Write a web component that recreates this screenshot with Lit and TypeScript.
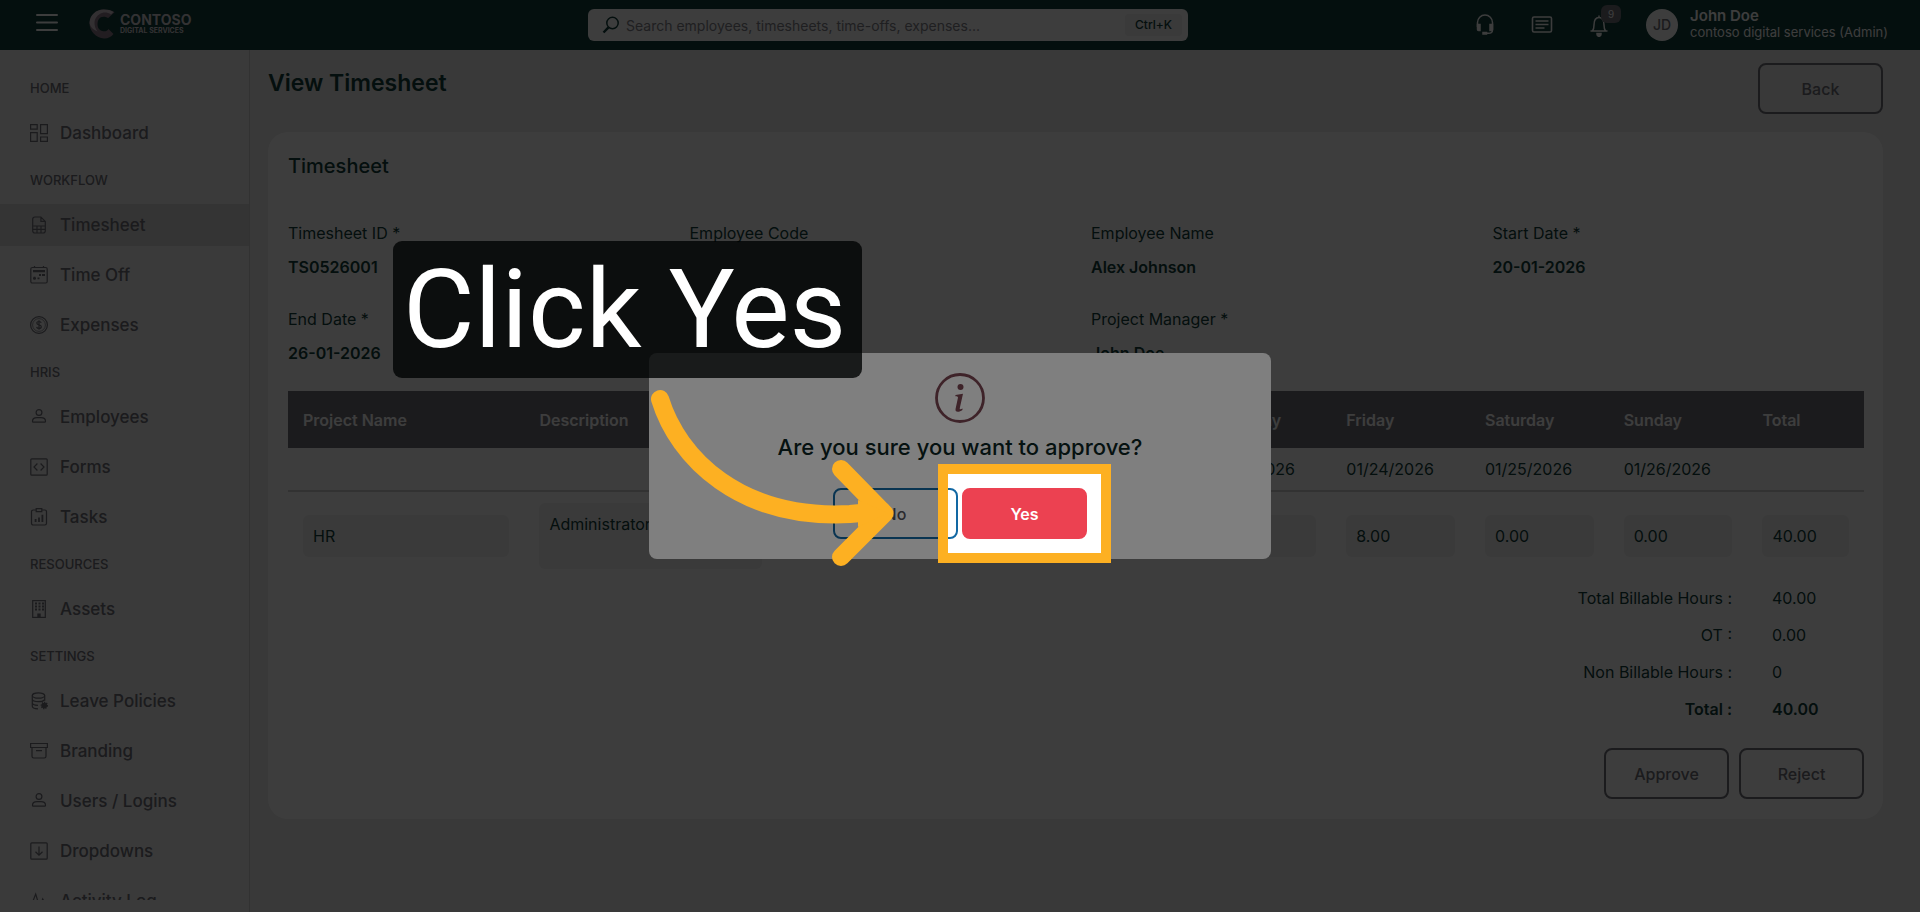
import { LitElement, html, css, svg, nothing } from "lit";
import { customElement } from "lit/decorators.js";
import { classMap } from "lit/directives/class-map.js";

const icons: Record<string, unknown> = {
  dashboard: svg`<path d="M.6 .6h6.600v4.600H.6zM10.600 .6h6.800v9h-6.800zM.6 8.600h6.600v8.800H.6zM10.600 13h6.800v4.400h-6.800z"/>`,
  timesheet: svg`<path d="M2.700 3.200A2.200 2.200 0 0 1 4.900 1h6L15.300 5.400v9.400a2.200 2.200 0 0 1-2.200 2.200H4.900a2.200 2.200 0 0 1-2.200-2.200zM10.900 1v4.400h4.400M2.700 10h12.600M2.700 13.400h12.600M7 10v7M11 10v7"/>`,
  timeoff: svg`<rect x=".8" y="1.500" width="16.400" height="15.500" rx="1.500"/><path d="M4.500 0v2M13.500 0v2"/><path d="M3 4.500h12M3 5.700h12"/><path stroke-width="1.800" d="M9 9h2M12 9h3M7.500 12.300h2M3 12.300h3M4.500 10.800v3"/>`,
  expenses: svg`<circle cx="9" cy="9" r="8.400"/><circle cx="9" cy="9" r="6.400" stroke-width=".7"/><path d="M11.200 6.800C10.900 5.900 10 5.500 9 5.500c-1.300 0-2.200.6-2.200 1.600C6.800 9.500 11.300 8.400 11.300 10.800c0 1-.9 1.700-2.300 1.700-1.200 0-2.100-.5-2.400-1.500M9 4.300v9.400"/>`,
  person: svg`<circle cx="9" cy="4.500" r="2.900"/><path d="M2.500 13.200c0-2.300 2-3.600 4.500-3.600h4c2.500 0 4.500 1.300 4.500 3.600 0 .7-.4 1-1 1h-11c-.6 0-1-.3-1-1z"/>`,
  forms: svg`<rect x=".8" y=".8" width="16.400" height="16.400" rx="1"/><path d="M7.400 5.500L4 9l3.400 3.500M10.600 5.500L14 9l-3.400 3.500"/>`,
  tasks: svg`<path d="M6 2H3.200A1.700 1.700 0 0 0 1.500 3.700v11.600A1.700 1.700 0 0 0 3.200 17h11.600a1.700 1.700 0 0 0 1.700-1.700V3.700A1.700 1.700 0 0 0 14.800 2H12M6.200.6h5.600v3H6.200z"/><path stroke-width="1.800" d="M5.600 14v-3M9 14V9.500M12.400 14V6.800"/>`,
  assets: svg`<rect x="2.700" y=".6" width="12.600" height="16.800"/><path stroke-width="1.800" stroke-dasharray="2 1.500" d="M5 3.500h9M5 6.500h9M5 9.500h9"/><path stroke-width="3.400" d="M9 17v-3.500"/>`,
  leave: svg`<ellipse cx="8.500" cy="3.500" rx="6.200" ry="2.700"/><path d="M2.300 3.500v10.800c0 1.400 2.400 2.500 5.700 2.600M14.700 3.500v5.200M2.300 7c0 1.500 2.700 2.700 6.200 2.700 2.600 0 4.900-.7 5.800-1.700M2.300 10.700c0 1.400 2.400 2.500 5.700 2.600"/><circle cx="14.300" cy="13.500" r="2.800" fill="currentColor" stroke-width="1.800" stroke-dasharray="1.200 .9"/>`,
  branding: svg`<path d="M.6 1.500h16.800v4H.6zM2 5.500v8.800A1.700 1.700 0 0 0 3.700 16h10.600a1.700 1.700 0 0 0 1.700-1.700V5.500M6 8.700h6"/>`,
  dropdowns: svg`<rect x=".8" y=".8" width="16.400" height="16.400" rx="1"/><path d="M9 4.500v8.500M5.500 9.800L9 13.200l3.500-3.400"/>`,
  activity: svg`<path d="M0 8.500h3.200L5.700 2l4 13.500 3-8.500 1.500 2.500H18"/>`,
};

const nav = [
  { title: "HOME", items: [["dashboard", "Dashboard"]] },
  { title: "WORKFLOW", items: [["timesheet", "Timesheet"], ["timeoff", "Time Off"], ["expenses", "Expenses"]] },
  { title: "HRIS", items: [["person", "Employees"], ["forms", "Forms"], ["tasks", "Tasks"]] },
  { title: "RESOURCES", items: [["assets", "Assets"]] },
  {
    title: "SETTINGS",
    items: [["leave", "Leave Policies"], ["branding", "Branding"], ["person", "Users / Logins"], ["dropdowns", "Dropdowns"], ["activity", "Activity Log"]],
  },
];

const buttonStyles = css`
  button {
    font: inherit;
    cursor: pointer;
  }
  .btn {
    box-sizing: border-box;
    min-width: 125px;
    height: 51px;
    border: 2px solid #71717a;
    border-radius: 8px;
    background: transparent;
    color: #71717a;
    font-size: 16px;
    font-weight: 500;
  }
`;

@customElement("app-header")
class AppHeader extends LitElement {
  static styles = css`
    :host { display: block; background: #113e3a; color: #fff; }
    .bar { display: flex; align-items: center; height: 50px; padding: 0 32px 0 36px; box-sizing: border-box; }
    .side { display: flex; align-items: center; }
    .left { flex: 0 1 552px; }
    .menu { background: none; border: 0; padding: 0; color: inherit; width: 22px; height: 20px; cursor: pointer; margin-top: -4px; }
    .logo { display: flex; align-items: center; gap: 5px; margin-left: 31px; margin-top: -2px; color: #d5cfd5; }
    .brand { font-size: 14px; font-weight: 700; line-height: 14px; }
    .brand small { display: block; font-size: 7px; line-height: 8px; font-weight: 700; }
    .search { display: flex; align-items: center; gap: 6px; flex: 0 1 600px; height: 32px; box-sizing: border-box; padding: 0 6px 0 14px; background: #fff; border-radius: 6px; color: #113e3a; }
    .search input { flex: 1; min-width: 0; border: 0; outline: 0; background: none; font: inherit; font-size: 14px; color: inherit; padding: 0; }
    .search input::placeholder { color: #83838a; opacity: 1; }
    kbd { font: inherit; font-size: 12px; font-weight: 500; line-height: 22px; padding: 0 10px; background: #f0f0f0; border-radius: 4px; }
    .right { justify-content: flex-end; flex: 1; }
    .icon { position: relative; background: none; border: 0; padding: 0; color: inherit; width: 22px; height: 24px; cursor: pointer; margin-right: 35px; }
    .icon svg { display: block; }
    .badge { position: absolute; left: 13px; top: -8px; width: 20px; height: 18px; border-radius: 6px; background: #71717a; font-size: 11px; line-height: 18px; text-align: center; }
    .avatar { width: 32px; height: 32px; border-radius: 50%; background: #fff; color: #71717a; font-size: 14px; font-weight: 500; line-height: 32px; text-align: center; margin: 0 12px 0 1px; }
    .who { font-size: 13px; line-height: 16px; white-space: nowrap; padding-bottom: 2px; }
    .who b { display: block; font-size: 15px; font-weight: 600; }
  `;
  render() {
    return html`<header class="bar">
      <div class="side left">
        <button class="menu" aria-label="Menu">
          <svg width="22" height="20" viewBox="0 0 22 20" stroke="currentColor" stroke-width="2" stroke-linecap="round"><path d="M1 2h20M1 9.500h20M1 17h20" /></svg>
        </button>
        <div class="logo">
          <svg width="26" height="30" viewBox="0 0 26 30">
            <path fill="#8d7a8a" d="M15 .5C7 .5 1 7 .5 14 .3 22 7 29 15 29.500c4 .2 7-1.500 9.500-4.500l-5-5c-1 2-3 2.500-5 2.300-4-.3-6-3.500-6-7.300s2-7.300 6-7.300c2 0 3.500.5 4.500 1.500l6.500-6C23 1.500 20 .5 15 .5z" />
            <path fill="#d5c8d2" d="M.6 13C1 6 7 .5 14.500.5 19 .5 22 1.300 24.500 3L22 5.500c-3-2-6-2.500-9-1.500-4 1.300-7 5-7.500 9-.2 4 1 7 3 9.500C3 20 .5 17 .6 13z" />
          </svg>
          <div class="brand">CONTOSO<small>DIGITAL SERVICES</small></div>
        </div>
      </div>
      <label class="search">
        <svg width="18" height="18" viewBox="0 0 18 18" fill="none" stroke="currentColor" stroke-width="1.500"><circle cx="10.500" cy="7" r="5.700" /><path stroke-width="2.400" d="M6.500 11.300L1.500 16.500" /></svg>
        <input type="search" aria-label="Search" placeholder="Search employees, timesheets, time-offs, expenses..." />
        <kbd>Ctrl+K</kbd>
      </label>
      <div class="side right">
        <button class="icon" aria-label="Support">
          <svg width="22" height="24" viewBox="0 0 22 24" fill="none" stroke="currentColor" stroke-width="1.500"><path d="M3.500 14V9.500a7.500 7.500 0 0 1 15 0V17c0 2.500-1.500 3.300-4 3.300H12" /><path fill="currentColor" d="M3.500 11.500h2.500v6H4.500a1 1 0 0 1-1-1zM18.500 11.500H16v6h1.500a1 1 0 0 0 1-1zM9 19.500h3.500v1.500H9z" /></svg>
        </button>
        <button class="icon" aria-label="Messages">
          <svg width="22" height="24" viewBox="0 0 22 24" fill="none" stroke="currentColor" stroke-width="1.600"><rect x="1.500" y="4" width="19" height="15" rx="1.500" /><path d="M4.500 8h13M4.500 11.500h13M4.500 15h9" /></svg>
        </button>
        <button class="icon" aria-label="Notifications">
          <svg width="22" height="24" viewBox="0 0 22 24" fill="none" stroke="currentColor" stroke-width="1.500"><path d="M2.500 18h17M4.500 18c1-1.500 1.500-3 1.500-6 0-4 1.500-7.500 5-7.500s5 3.500 5 7.500c0 3 .5 4.500 1.500 6M11 2.500v2" /><path fill="currentColor" d="M9 20.500h4v.8a2 2 0 0 1-4 0z" /></svg>
          <span class="badge">9</span>
        </button>
        <div class="avatar">JD</div>
        <div class="who"><b>John Doe</b>contoso digital services (Admin)</div>
      </div>
    </header>`;
  }
}

@customElement("app-sidebar")
class AppSidebar extends LitElement {
  static styles = css`
    :host { display: block; box-sizing: border-box; width: 250px; flex: none; padding-bottom: 12px; background: #f0f0f0; border-right: 1px solid #cfcfcf; color: #71717a; }
    nav { height: 100%; overflow: hidden; padding-top: 26px; box-sizing: border-box; }
    h2 { margin: 0; padding: 0 30px; font-size: 13px; font-weight: 500; line-height: 24px; }
    ul { list-style: none; margin: 12px 0 14px; padding: 0; display: grid; gap: 8px; }
    a { display: flex; align-items: center; gap: 12px; height: 42px; padding: 0 30px; color: inherit; text-decoration: none; font-size: 17px; font-weight: 500; }
    a.active { background: #d9d9d9; }
    svg { flex: none; }
  `;
  render() {
    return html`<nav>
      ${nav.map(
        (s) => html`<h2>${s.title}</h2>
          <ul>
            ${s.items.map(
              ([icon, label]) => html`<li>
                <a href="#" class=${classMap({ active: label === "Timesheet" })}>
                  <svg width="18" height="18" viewBox="0 0 18 18" fill="none" stroke="currentColor" stroke-width="1.200">${icons[icon]}</svg>${label}
                </a>
              </li>`
            )}
          </ul>`
      )}
    </nav>`;
  }
}

const details: [string, string][] = [
  ["Timesheet ID *", "TS0526001"],
  ["Employee Code", ""],
  ["Employee Name", "Alex Johnson"],
  ["Start Date *", "20-01-2026"],
  ["End Date *", "26-01-2026"],
  ["", ""],
  ["Project Manager *", "John Doe"],
];
const days: [string, string, string][] = [
  ["Monday", "01/20/2026", "8.00"],
  ["Tuesday", "01/21/2026", "8.00"],
  ["Wednesday", "01/22/2026", "8.00"],
  ["Thursday", "01/23/2026", "8.00"],
  ["Friday", "01/24/2026", "8.00"],
  ["Saturday", "01/25/2026", "0.00"],
  ["Sunday", "01/26/2026", "0.00"],
];
const totals = [
  ["Total Billable Hours :", "40.00"],
  ["OT :", "0.00"],
  ["Non Billable Hours :", "0"],
  ["Total :", "40.00"],
];

@customElement("timesheet-view")
class TimesheetView extends LitElement {
  static styles = [
    buttonStyles,
    css`
      :host { display: block; flex: 1; min-width: 0; overflow: hidden; box-sizing: border-box; padding: 13px 37px 0 18px; background: #ededed; color: #113e3a; }
      .top { display: flex; justify-content: space-between; align-items: flex-start; padding-bottom: 18px; }
      h1 { margin: 0; font-size: 23px; font-weight: 600; line-height: 41px; }
      .card { background: #fff; border-radius: 20px; padding: 20px 19px 20px 20px; }
      h2 { margin: 0 0 36px; font-size: 20px; font-weight: 500; line-height: 28px; }
      dl { margin: 0; }
      .details { display: grid; grid-template-columns: repeat(4, 1fr); column-gap: 30px; row-gap: 18px; font-size: 16px; line-height: 34px; }
      .details > div { height: 68px; }
      dd { margin: 0; }
      .details dd { font-weight: 600; }
      table { width: 100%; margin-top: 21px; table-layout: fixed; border-collapse: collapse; text-align: left; font-size: 16px; }
      th, td { box-sizing: border-box; padding: 0 15px; font-weight: 400; }
      .head th { height: 57px; padding-top: 0; background: #71717a; color: #fff; font-weight: 600; }
      .dates td { height: 43px; border-bottom: 2px solid #d2d2d2; }
      .entry td { height: 88px; }
      .project { width: 15%; }
      .desc { width: 16%; }
      .total { width: 7.400%; }
      input, textarea { display: block; box-sizing: border-box; width: 100%; height: 42px; padding: 0 10px; border: 0; border-radius: 6px; background: #f2f2f2; color: inherit; font: inherit; resize: none; outline: 0; }
      textarea { height: 66px; padding: 9px 10px; line-height: 24px; }
      .totals { display: grid; grid-template-columns: 1fr 92px; column-gap: 40px; row-gap: 5px; margin-top: 3px; line-height: 32px; font-size: 16px; }
      .totals > div { display: contents; }
      .totals dt { text-align: right; }
      .totals > div:last-child { font-weight: 600; }
      .actions { display: flex; justify-content: flex-end; gap: 10px; margin-top: 23px; }
    `,
  ];
  render() {
    return html`<main>
      <div class="top"><h1>View Timesheet</h1><button class="btn">Back</button></div>
      <section class="card">
        <h2>Timesheet</h2>
        <dl class="details">
          ${details.map(([k, v]) => html`<div>${k ? html`<dt>${k}</dt><dd>${v}</dd>` : nothing}</div>`)}
        </dl>
        <table>
          <thead>
            <tr class="head">
              <th class="project">Project Name</th>
              <th class="desc">Description</th>
              ${days.map(([d]) => html`<th>${d}</th>`)}
              <th class="total">Total</th>
            </tr>
          </thead>
          <tbody>
            <tr class="dates"><td></td><td></td>${days.map(([, d]) => html`<td>${d}</td>`)}<td></td></tr>
            <tr class="entry">
              <td><input aria-label="Project Name" readonly .value=${"HR"} /></td>
              <td><textarea aria-label="Description" readonly .value=${"Administrator"}></textarea></td>
              ${days.map(([d, , h]) => html`<td><input aria-label=${d} readonly .value=${h} /></td>`)}
              <td><input aria-label="Total" readonly .value=${"40.00"} /></td>
            </tr>
          </tbody>
        </table>
        <dl class="totals">
          ${totals.map(([k, v]) => html`<div><dt>${k}</dt><dd>${v}</dd></div>`)}
        </dl>
        <div class="actions"><button class="btn">Approve</button><button class="btn">Reject</button></div>
      </section>
    </main>`;
  }
}

@customElement("confirm-dialog")
class ConfirmDialog extends LitElement {
  static styles = [
    buttonStyles,
    css`
      :host { position: fixed; inset: 0; overflow: hidden; display: flex; align-items: center; justify-content: center; background: rgba(0, 0, 0, 0.52); }
      .dialog { box-sizing: border-box; width: 622px; padding: 20px; border-radius: 8px; background: #fff; display: flex; flex-direction: column; align-items: center; }
      p { margin: 7px 0 24px; font-size: 22px; font-weight: 500; line-height: 34px; color: #0b2422; }
      .info { display: block; color: #7c4652; }
      .buttons { display: flex; gap: 4px; }
      .no { border-color: #1268a3; color: #55555c; }
      .yes { border-color: #ec4151; background: #ec4151; color: #fff; font-weight: 600; }
      .target { position: relative; }
      .spot { position: absolute; inset: -24px; border: 10px solid #fdb022; box-shadow: 0 0 0 4000px rgba(0, 0, 0, 0.5); pointer-events: none; }
      .callout { position: absolute; left: -569px; top: -247px; box-sizing: border-box; width: 469px; height: 137px; padding-left: 10px; border-radius: 9px; background: rgba(0, 3, 3, 0.8); color: #fff; font-family: Roboto, sans-serif; font-size: 110px; line-height: 137px; white-space: nowrap; }
      .arrow { position: absolute; left: -327px; top: -108px; }
    `,
  ];
  render() {
    return html`<div class="dialog" role="dialog" aria-modal="true" aria-labelledby="ask">
      <svg class="info" width="50" height="50" viewBox="0 0 50 50" fill="none" stroke="currentColor">
        <circle cx="25" cy="25" r="23.500" stroke-width="2.800" />
        <circle cx="25.500" cy="14" r="3" fill="currentColor" stroke="none" />
        <path fill="currentColor" stroke="none" d="M20.500 22l7.500-1.200-3.200 14.200c-.2 1 .1 1.500.8 1.300l2-.8-.2 1.500c-1.500 1.200-3 1.800-4.600 1.800-2 0-2.600-1.200-2.200-3l2.300-10.800c.3-1.300-.2-1.800-2.600-1.800z" />
      </svg>
      <p id="ask">Are you sure you want to approve?</p>
      <div class="buttons">
        <button class="btn no">No</button>
        <div class="target">
          <button class="btn yes">Yes</button>
          <div class="spot"></div>
          <div class="callout">Click Yes</div>
          <svg class="arrow" width="270" height="200" viewBox="635 380 270 200" fill="none" stroke="#fdb022" stroke-width="18" stroke-linecap="round" stroke-linejoin="round">
            <path d="M660 399C678 458 740 520 850 514L882 511" />
            <path d="M841 469l43.500 44.500L841 557" />
            <path fill="#fdb022" stroke="none" d="M858 500l30 13-30 14z" />
          </svg>
        </div>
      </div>
    </div>`;
  }
}

@customElement("app-root")
class AppRoot extends LitElement {
  static styles = css`
    :host { display: flex; flex-direction: column; height: 100vh; overflow: hidden; font-family: Inter, "Open Sans", sans-serif; }
    .body { flex: 1; min-height: 0; display: flex; }
  `;
  render() {
    return html`<app-header></app-header>
      <div class="body"><app-sidebar></app-sidebar><timesheet-view></timesheet-view></div>
      <confirm-dialog></confirm-dialog>`;
  }
}
